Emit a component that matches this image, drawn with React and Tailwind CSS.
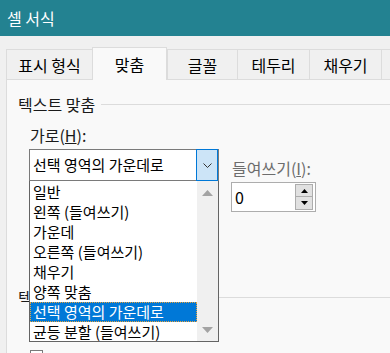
import React from 'react';

const font = { fontFamily: '"Noto Sans CJK KR", "Noto Sans", sans-serif' };

const tabs = [
  { label: '표시 형식', w: 'w-[86px]' },
  { label: '맞춤', w: 'w-[75px]', active: true },
  { label: '글꼴', w: 'w-[70px]' },
  { label: '테두리', w: 'w-[72px]' },
  { label: '채우기', w: 'w-[72px]' },
];

const options = [
  '일반',
  '왼쪽 (들여쓰기)',
  '가운데',
  '오른쪽 (들여쓰기)',
  '채우기',
  '양쪽 맞춤',
  '선택 영역의 가운데로',
  '균등 분할 (들여쓰기)',
];

const GroupHeading = ({ children }) => (
  <div className="flex items-center h-[20px] pl-[11px]">
    <span className="text-[16px] leading-[20px] text-[#1a1a1a]">{children}</span>
    <div className="flex-1 ml-[6px] h-px bg-[#dcdcdc]" />
  </div>
);

const App = () => {
  return (
    <div className="relative w-[390px] h-[353px] overflow-hidden bg-[#f0f0f0]" style={font}>
      {/* Title bar */}
      <div className="h-[36px] bg-[#238291] flex items-center pl-[7px] text-white text-[16px]">
        셀 서식
      </div>

      {/* Tabs */}
      <div className="flex items-end h-[32px] mt-[11px] pl-[6px]">
        {tabs.map((t) => (
          <div
            key={t.label}
            className={
              t.active
                ? `${t.w} h-[33px] -mb-px relative z-10 bg-[#f9f9f9] border-t border-x border-[#dcdcdc] flex items-center justify-center text-[16px] text-black`
                : `${t.w} h-[30px] bg-[#f0f0f0] border-t border-l border-[#dcdcdc] flex items-center justify-center text-[16px] text-black`
            }
          >
            {t.label}
          </div>
        ))}
        <div className="flex-1 h-[30px] border-t border-l border-[#dcdcdc]" />
      </div>

      {/* Panel */}
      <div className="ml-[6px] h-[300px] bg-[#f9f9f9] border-l border-t border-[#dcdcdc] pt-[14px]">
        <GroupHeading>텍스트 맞춤</GroupHeading>

        <div className="flex mt-[11px]">
          <div className="ml-[22px]">
            <div className="h-[20px] leading-[20px] text-[16px] text-[#1a1a1a] pl-[1px]">
              가로(<span className="underline">H</span>):
            </div>
            <div className="mt-[4px] w-[190px] h-[32px] bg-white border border-[#7a7a7a] flex">
              <div className="flex-1 flex items-center pl-[3px] text-[15px] text-black">
                선택 영역의 가운데로
              </div>
              <div className="w-[22px] -my-px bg-[#cce4f7] border border-[#0078d7] flex items-center justify-center">
                <svg width="9" height="5" viewBox="0 0 9 5">
                  <path d="M0.5 0.5 L4.5 4.5 L8.5 0.5" fill="none" stroke="#333" strokeWidth="1" />
                </svg>
              </div>
            </div>
          </div>

          <div className="ml-[12px] mt-[33px]">
            <div className="h-[20px] leading-[20px] text-[16px] text-[#6d6d6d] pl-[1px]">
              들여쓰기(<span className="underline">I</span>):
            </div>
            <div className="mt-[4px] w-[85px] h-[30px] bg-white border border-[#adadad] flex items-center">
              <div className="flex-1 pl-[3px] text-[16px] text-black">0</div>
              <div className="w-[18px] h-[26px] mr-[2px] flex flex-col">
                <div className="h-[13px] bg-[#e1e1e1] border border-[#adadad] flex items-center justify-center">
                  <svg width="7" height="4" viewBox="0 0 7 4">
                    <path d="M3.5 0 L7 4 L0 4 Z" fill="#000" />
                  </svg>
                </div>
                <div className="h-[13px] bg-[#e1e1e1] border border-t-0 border-[#adadad] flex items-center justify-center">
                  <svg width="7" height="4" viewBox="0 0 7 4">
                    <path d="M0 0 L7 0 L3.5 4 Z" fill="#000" />
                  </svg>
                </div>
              </div>
            </div>
          </div>
        </div>

        <div className="mt-[75px]">
          <GroupHeading>텍스트 조정</GroupHeading>
        </div>

        <div className="ml-[23px] mt-[43px] w-[13px] h-[13px] border border-[#7a7a7a] bg-white" />
      </div>

      {/* Dropdown list (open) */}
      <div className="absolute left-[29px] top-[181px] w-[190px] h-[161px] bg-white border-x border-b border-[#646464] flex z-20">
        <div className="flex-1 flex flex-col pt-px">
          {options.map((o) => {
            const selected = o === '선택 영역의 가운데로';
            return (
              <div
                key={o}
                className={
                  selected
                    ? 'h-[20px] flex items-center pl-[2px] text-[15px] text-white bg-[#0078d7] border border-dotted border-[#e8a33d]'
                    : 'h-[20px] flex items-center pl-[3px] text-[15px] text-black'
                }
              >
                {o}
              </div>
            );
          })}
        </div>
        <div className="w-[21px] bg-[#f0f0f0] flex flex-col items-center justify-between pt-[9px] pb-[8px]">
          <svg width="11" height="6" viewBox="0 0 11 6">
            <path d="M5.5 0 L11 6 L0 6 Z" fill="#a3a3a3" />
          </svg>
          <svg width="11" height="6" viewBox="0 0 11 6">
            <path d="M0 0 L11 0 L5.5 6 Z" fill="#a3a3a3" />
          </svg>
        </div>
      </div>
    </div>
  );
};

export default App;
